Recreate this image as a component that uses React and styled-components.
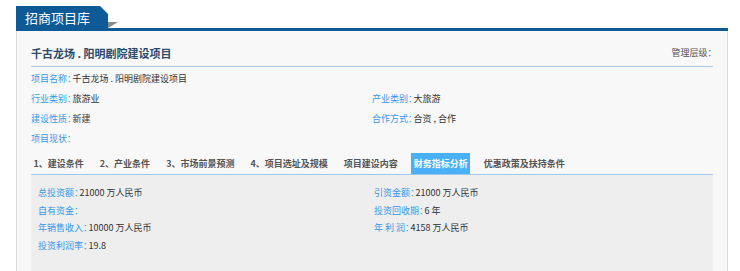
import React from 'react';
import styled, { createGlobalStyle } from 'styled-components';

const GlobalStyle = createGlobalStyle`
  html, body, #root { height: 100%; }
  body {
    margin: 0;
    background: #fff;
    font-family: "Noto Sans CJK SC", "Noto Sans", sans-serif;
    font-size: 9px;
    color: #333;
  }
`

const info = [
  { label: '项目名称', value: '千古龙场 . 阳明剧院建设项目', full: true },
  { label: '行业类别', value: '旅游业' },
  { label: '产业类别', value: '大旅游' },
  { label: '建设性质', value: '新建' },
  { label: '合作方式', value: '合资 , 合作' },
  { label: '项目现状', value: '', full: true },
]

const tabs = ['1、建设条件', '2、产业条件', '3、市场前景预测', '4、项目选址及规模', '项目建设内容', '财务指标分析', '优惠政策及扶持条件']

const finance = [
  { label: '总投资额', value: '21000 万人民币' },
  { label: '引资金额', value: '21000 万人民币' },
  { label: '自有资金', value: '' },
  { label: '投资回收期', value: '6 年' },
  { label: '年销售收入', value: '10000 万人民币' },
  { label: '年 利 润', value: '4158 万人民币' },
  { label: '投资利润率', value: '19.8' },
]

export default function App() {
  return (
    <>
      <GlobalStyle />
      <StyPage>
        <StyHeader>
          <StyHeaderTab>招商项目库</StyHeaderTab>
          <StyFold />
        </StyHeader>
        <StyPanel>
          <StyTitleRow>
            <StyTitle>千古龙场 . 阳明剧院建设项目</StyTitle>
            <StyLevel>管理层级：</StyLevel>
          </StyTitleRow>
          <StyInfoGrid>
            {info.map((it) => (
              <StyField key={it.label} $full={it.full}>
                <StyLabel>{it.label}：</StyLabel>{it.value}
              </StyField>
            ))}
          </StyInfoGrid>
          <StyTabBar>
            {tabs.map((t) => (
              <StyTab key={t} $active={t === '财务指标分析'}>{t}</StyTab>
            ))}
          </StyTabBar>
          <StyTabBody>
            {finance.map((it) => (
              <StyField key={it.label}>
                <StyLabel>{it.label}：</StyLabel>{it.value}
              </StyField>
            ))}
          </StyTabBody>
        </StyPanel>
      </StyPage>
    </>
  );
}

// Styled Components

const StyPage = styled.div`
  height: 100%;
  display: flex;
  flex-direction: column;
  padding: 6px 12px 0 16px;
  box-sizing: border-box;
  width: 740px;
`

const StyHeader = styled.div`
  display: flex;
  align-items: flex-end;
  height: 22px;
  border-bottom: 3px solid #0d5a97;
`

const StyHeaderTab = styled.div`
  width: 92px;
  height: 22px;
  box-sizing: border-box;
  padding-left: 9px;
  background: #0d5a97;
  color: #fff;
  font-size: 13px;
  line-height: 23px;
  clip-path: polygon(0 0, 84px 0, 92px 8px, 92px 100%, 0 100%);
`

const StyFold = styled.div`
  width: 0;
  height: 0;
  border-top: 6px solid #8a8a8a;
  border-right: 10px solid transparent;
`

const StyPanel = styled.div`
  flex: 1;
  display: flex;
  flex-direction: column;
  background: #f8f8f8;
  border-left: 1px solid #dcdcdc;
  border-right: 1px solid #dcdcdc;
  padding: 0 14px;
`

const StyTitleRow = styled.div`
  display: flex;
  justify-content: space-between;
  align-items: flex-end;
  padding: 15px 0 6px;
  border-bottom: 1px solid #a9c8e8;
`

const StyTitle = styled.div`
  font-size: 11px;
  line-height: 14px;
  font-weight: bold;
  color: #2b4a6c;
`

const StyLevel = styled.div`
  font-size: 9px;
  line-height: 14px;
  color: #555;
  padding-right: 1px;
  font-feature-settings: "halt";
`

const StyInfoGrid = styled.div`
  display: grid;
  grid-template-columns: 341px 1fr;
  grid-auto-rows: 20px;
  padding-top: 1px;
`

const StyField = styled.div`
  display: flex;
  align-items: center;
  white-space: pre;
  color: #333;
  grid-column: ${(p) => (p.$full ? '1 / -1' : 'auto')};
`

const StyLabel = styled.span`
  color: #3498ea;
  margin-right: 1px;
  font-feature-settings: "halt";
`

const StyTabBar = styled.div`
  display: flex;
  gap: 11px;
  margin-top: 5px;
  height: 21px;
  border-bottom: 1px solid #9cc8ee;
`

const StyTab = styled.div`
  padding: 0 2.5px;
  line-height: 22px;
  font-weight: 600;
  color: ${(p) => (p.$active ? '#fff' : '#555')};
  background: ${(p) => (p.$active ? '#49b0f6' : 'transparent')};
`

const StyTabBody = styled.div`
  flex: 1;
  display: grid;
  grid-template-columns: 336px 1fr;
  grid-auto-rows: 17.5px;
  align-content: start;
  padding: 9px 0 0 7px;
  background: #eeeeee;
`
